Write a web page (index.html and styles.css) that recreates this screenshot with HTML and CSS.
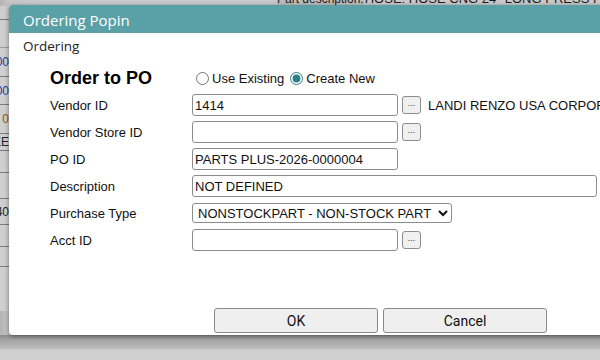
FILE: index.html
```html
<!DOCTYPE html>
<html>
<head>
<meta charset="utf-8">
<link rel="stylesheet" href="styles.css">
</head>
<body>
<div class="page">
  <div class="topbar">
    <span class="pd">Part description:</span>
    <span class="hose">HOSE: HOSE CNG 24'' LONG PRESS FITTI</span>
  </div>
  <div class="bgrows">
    <div class="bgrow r1"></div>
    <div class="bgrow r2"></div>
    <div class="bgrow r3"><span class="blue">00</span></div>
    <div class="bgrow r4"><span class="blue">00</span></div>
    <div class="bgrow r5"><span class="orange">0</span></div>
    <div class="bgrow r6"><span class="dark">EE</span></div>
    <div class="bgrow r7"></div>
    <div class="bgrow r8"></div>
    <div class="bgrow r9"><span class="dark">40</span></div>
    <div class="bgrow r10"></div>
    <div class="bgrow r11"></div>
    <div class="bgrow r12"></div>
  </div>
  <div class="bottomband"></div>
</div>

<div class="dialog">
  <div class="titlebar">Ordering Popin</div>
  <div class="subtitle">Ordering</div>
  <div class="form">
    <div class="heading">Order to PO</div>
    <div class="radios">
      <label class="radio"><input type="radio" name="mode"> Use Existing</label>
      <label class="radio"><input type="radio" name="mode" checked> Create New</label>
    </div>

    <div class="label">Vendor ID</div>
    <div class="field">
      <input class="txt" type="text" value="1414">
      <button class="dots">...</button>
      <span class="vendor-name">LANDI RENZO USA CORPORATION</span>
    </div>

    <div class="label">Vendor Store ID</div>
    <div class="field">
      <input class="txt" type="text" value="">
      <button class="dots">...</button>
    </div>

    <div class="label">PO ID</div>
    <div class="field">
      <input class="txt" type="text" value="PARTS PLUS-2026-0000004">
    </div>

    <div class="label">Description</div>
    <div class="field">
      <input class="txt wide" type="text" value="NOT DEFINED">
    </div>

    <div class="label">Purchase Type</div>
    <div class="field">
      <select class="sel">
        <option>NONSTOCKPART - NON-STOCK PART</option>
      </select>
    </div>

    <div class="label">Acct ID</div>
    <div class="field">
      <input class="txt" type="text" value="">
      <button class="dots">...</button>
    </div>
  </div>
  <div class="actions">
    <button class="btn">OK</button>
    <button class="btn">Cancel</button>
  </div>
</div>
</body>
</html>
```
FILE: styles.css
```css
html, body {
  margin: 0;
  padding: 0;
}
body {
  width: 600px;
  height: 360px;
  overflow: hidden;
  position: relative;
  font-family: "Liberation Sans", Arial, sans-serif;
  background: #c9c9c9;
}

.page {
  width: 600px;
  height: 360px;
  display: flex;
  flex-direction: column;
  background: linear-gradient(to right, #b4b4b4 0px, #c6c6c6 10px, #c9c9c9 40px);
}

.topbar {
  height: 14px;
  margin-top: -8px;
  font-size: 12px;
  line-height: 14px;
  color: #1a1a1a;
  white-space: nowrap;
  display: flex;
  flex-shrink: 0;
}
.topbar .pd {
  margin-left: 277px;
  width: 100px;
  background: #bdbdbd;
}
.topbar .hose {
  margin-left: 1px;
  font-size: 13px;
}

.bgrows {
  display: flex;
  flex-direction: column;
  width: 40px;
  flex: 1;
  font-size: 12px;
}
.bgrow {
  border-bottom: 1px solid #7a7a7a;
  display: flex;
  align-items: center;
  justify-content: flex-end;
  padding-right: 31px;
  box-sizing: border-box;
  background: linear-gradient(to right, #d0d0d0, #b8b8b8);
}
.r1 { height: 14px; }
.r2 { height: 28px; border-bottom-color: #9a9a9a; }
.r3 { height: 29px; }
.r4 { height: 28px; }
.r5 { height: 29px; }
.r6 { height: 17px; }
.r7 { height: 22px; }
.r8 { height: 26px; }
.r9 { height: 26px; }
.r10 { height: 22px; }
.r11 { height: 20px; }
.r12 { height: 44px; border-bottom: none; }
.blue { color: #1a3fa0; }
.orange { color: #a05000; }
.dark { color: #222; }

.bottomband {
  position: absolute;
  left: 0;
  top: 335px;
  width: 600px;
  height: 25px;
  background: linear-gradient(to bottom, #8c8c8c 0px, #a8a8a8 6px, #b9b9b9 13px, #cfcfcf 15px, #d0d0d0 25px);
}

.dialog {
  position: absolute;
  left: 9px;
  top: 5px;
  width: 640px;
  height: 330px;
  background: #fff;
  border-radius: 4px;
  box-shadow: 0 1px 4px rgba(0, 0, 0, 0.45);
  display: flex;
  flex-direction: column;
  overflow: hidden;
}

.titlebar {
  height: 28px;
  flex-shrink: 0;
  background: #5aa0a7;
  color: #fff;
  font-family: "Open Sans", "Noto Sans", sans-serif;
  font-size: 15px;
  display: flex;
  align-items: center;
  padding-left: 14px;
  padding-top: 1px;
  box-sizing: border-box;
}

.subtitle {
  font-family: "Open Sans", "Noto Sans", sans-serif;
  font-size: 13.5px;
  color: #222;
  padding-left: 14px;
  height: 22px;
  display: flex;
  align-items: center;
  padding-top: 3px;
  box-sizing: border-box;
}

.form {
  margin-left: 41px;
  margin-top: 12px;
  display: grid;
  grid-template-columns: 142px auto;
  grid-auto-rows: 22px;
  row-gap: 5px;
  font-size: 13px;
  color: #111;
  align-items: center;
}

.heading {
  font-size: 18px;
  font-weight: bold;
  color: #000;
  height: 24px;
  display: flex;
  align-items: center;
}

.radios {
  display: flex;
  align-items: center;
  white-space: nowrap;
}
.radio {
  display: flex;
  align-items: center;
  margin-right: 2px;
}
.radio input {
  margin: 0 3px 0 4px;
  width: 13px;
  height: 13px;
  accent-color: #2f7f86;
}

.label {
  white-space: nowrap;
}

.field {
  display: flex;
  align-items: center;
  white-space: nowrap;
}

.txt {
  width: 206px;
  height: 22px;
  box-sizing: border-box;
  border: 1px solid #8c8c8c;
  border-radius: 3px;
  padding: 0 2px;
  font-family: "Liberation Sans", Arial, sans-serif;
  font-size: 13px;
  color: #111;
  margin: 0;
}
.txt.wide {
  width: 405px;
}

.sel {
  width: 260px;
  height: 20px;
  box-sizing: border-box;
  border: 1px solid #8c8c8c;
  border-radius: 3px;
  font-family: "Liberation Sans", Arial, sans-serif;
  font-size: 13px;
  color: #111;
  background: #fff;
  padding: 0 1px;
  margin: 0;
}

.dots {
  width: 19px;
  height: 18px;
  margin-left: 4px;
  padding: 0 0 4px 0;
  box-sizing: border-box;
  border: 1px solid #8c8c8c;
  border-radius: 3px;
  background: #f0f0f0;
  font-size: 9px;
  color: #333;
  font-family: "Liberation Sans", Arial, sans-serif;
  line-height: 10px;
}

.vendor-name {
  margin-left: 7px;
  font-size: 13px;
  color: #111;
}

.actions {
  margin-top: auto;
  margin-left: 205px;
  margin-bottom: 2px;
  display: flex;
  gap: 5px;
}
.btn {
  width: 164px;
  height: 25px;
  box-sizing: border-box;
  border: 1px solid #8a8a8a;
  border-radius: 3px;
  background: #efefef;
  font-family: Roboto, "Liberation Sans", sans-serif;
  font-size: 14px;
  color: #111;
  padding: 0;
}
```
